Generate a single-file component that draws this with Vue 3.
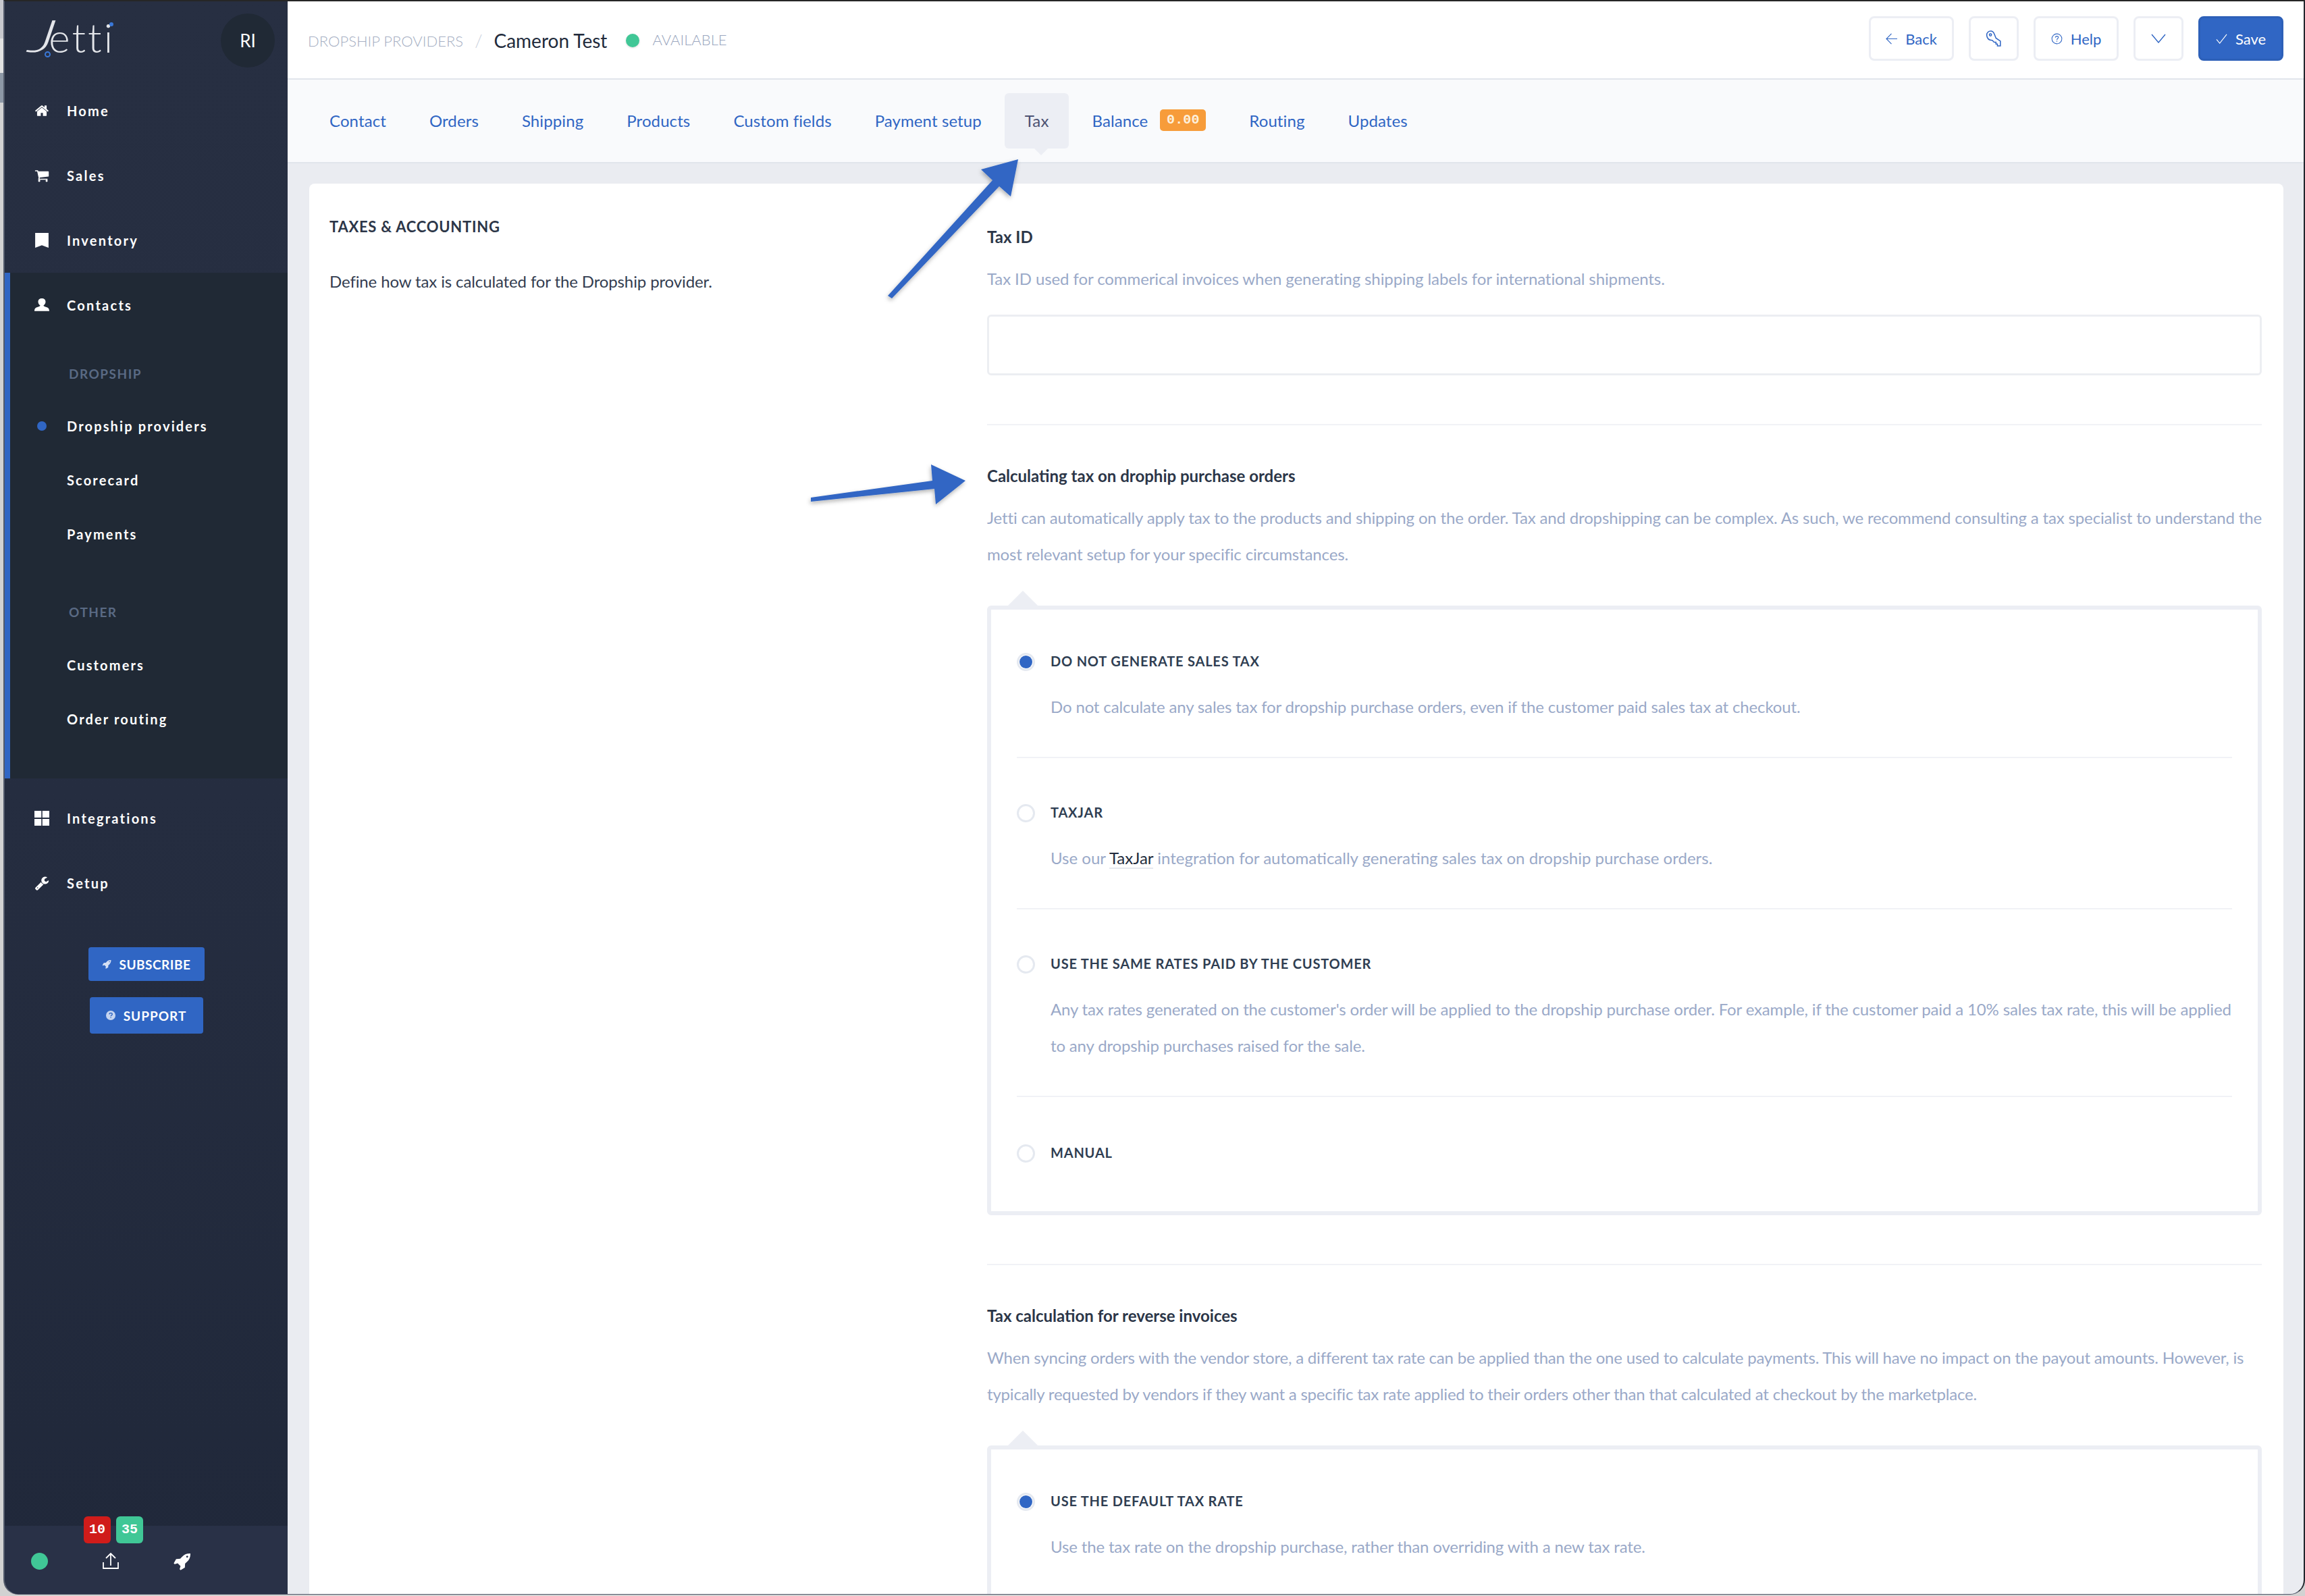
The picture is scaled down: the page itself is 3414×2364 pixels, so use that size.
<script setup>
const navTop = [
  { name: 'Home', icon: 'home' },
  { name: 'Sales', icon: 'cart' },
  { name: 'Inventory', icon: 'bookmark' },
]

const tabs = [
  { name: 'Contact' },
  { name: 'Orders' },
  { name: 'Shipping' },
  { name: 'Products' },
  { name: 'Custom fields' },
  { name: 'Payment setup' },
  { name: 'Tax', active: true },
  { name: 'Balance', badge: '0.00' },
  { name: 'Routing' },
  { name: 'Updates' },
]
</script>

<template>
  <div class="page">
    <div class="window">
      <aside class="sidebar">
        <div class="brand">
          <div class="logo">
            <span class="logo-j">J</span><span class="logo-rest">etti</span>
            <i class="logo-dot"></i>
            <i class="logo-ring"></i>
          </div>
          <div class="avatar">RI</div>
        </div>

        <a v-for="item in navTop" :key="item.name" class="nav-item">
          <svg v-if="item.icon === 'home'" class="nav-icon" viewBox="0 0 1792 1792"><path d="M1472 992v480q0 26-19 45t-45 19h-384v-384h-256v384h-384q-26 0-45-19t-19-45v-480q0-1 .5-3t.5-3l575-474 575 474q1 2 1 6zm223-69l-62 74q-8 9-21 11h-3q-13 0-21-7l-692-577-692 577q-12 8-24 7-13-2-21-11l-62-74q-8-10-7-23.500t11-21.500l719-599q32-26 76-26t76 26l244 204v-195q0-14 9-23t23-9h192q14 0 23 9t9 23v408l219 182q10 8 11 21.500t-7 23.500z"/></svg>
          <svg v-else-if="item.icon === 'cart'" class="nav-icon" viewBox="0 0 1792 1792"><path d="M704 1536q0 52-38 90t-90 38-90-38-38-90 38-90 90-38 90 38 38 90zm896 0q0 52-38 90t-90 38-90-38-38-90 38-90 90-38 90 38 38 90zm128-1088v512q0 24-16.500 42.500t-40.500 21.500l-1044 122q13 60 13 70 0 16-24 64h920q26 0 45 19t19 45-19 45-45 19h-1024q-26 0-45-19t-19-45q0-11 8-31.500t16-36 21.500-40 15.500-29.500l-177-823h-204q-26 0-45-19t-19-45 19-45 45-19h256q16 0 28.500 6.500t19.500 15.500 13 24.500 8 26 5.500 29.500 4.500 26h1201q26 0 45 19t19 45z"/></svg>
          <svg v-else class="nav-icon" viewBox="0 0 20 20"><path d="M1 0h18v20l-9-3.500-9 3.500z"/></svg>
          <span>{{ item.name }}</span>
        </a>

        <div class="nav-group">
          <a class="nav-item">
            <svg class="nav-icon" viewBox="0 0 20 20"><path d="M10 1c3 0 5 1.800 5 4.500 0 2.300-1.300 4-2.800 5 .3 1 1.500 1.500 3.300 2 2 .6 4.500 1.500 4.500 5.500H0c0-4 2.500-4.900 4.500-5.500 1.800-.5 3-1 3.300-2C6.300 9.500 5 7.800 5 5.500 5 2.800 7 1 10 1z"/></svg>
            <span>Contacts</span>
          </a>
          <div class="sub-label">DROPSHIP</div>
          <a class="sub-item"><i class="sub-dot"></i>Dropship providers</a>
          <a class="sub-item">Scorecard</a>
          <a class="sub-item">Payments</a>
          <div class="sub-label other">OTHER</div>
          <a class="sub-item">Customers</a>
          <a class="sub-item">Order routing</a>
        </div>

        <a class="nav-item first-after">
          <svg class="nav-icon grid" viewBox="0 0 20 20"><path d="M0 0h9.300v9H0zM10.700 0H20v9h-9.300zM0 11h9.300v9H0zM10.700 11H20v9h-9.300z"/></svg>
          <span>Integrations</span>
        </a>
        <a class="nav-item">
          <svg class="nav-icon" viewBox="0 0 1792 1792"><path d="M448 1472q0-26-19-45t-45-19-45 19-19 45 19 45 45 19 45-19 19-45zm644-420l-682 682q-37 37-90 37-52 0-91-37l-106-108q-38-36-38-90 0-53 38-91l681-681q39 98 114.500 173.500t173.500 114.500zm634-435q0 39-23 106-47 134-164.500 217.500t-258.500 83.500q-185 0-316.500-131.500t-131.500-316.500 131.500-316.500 316.500-131.500q58 0 121.500 16.500t107.500 46.500q16 11 16 28t-16 28l-293 169v224l193 107q5-3 79-48.500t135.500-81 70.500-35.500q15 0 23.500 10t8.500 25z"/></svg>
          <span>Setup</span>
        </a>

        <div class="side-buttons">
          <button class="side-btn sub">
            <svg viewBox="0 0 1792 1792"><path d="M1504 448q0-40-28-68t-68-28-68 28-28 68 28 68 68 28 68-28 28-68zm224-288q0 249-75.500 430.500t-253.500 360.500q-81 80-195 176l-20 379q-2 16-16 26l-384 224q-7 4-16 4-12 0-23-9l-64-64q-13-14-8-32l85-276-281-281-276 85q-3 1-9 1-14 0-23-9l-64-64q-17-19-5-39l224-384q10-14 26-16l379-20q96-114 176-195 188-187 358-258t431-71q14 0 23 9t9 23z"/></svg>
            SUBSCRIBE
          </button>
          <button class="side-btn sup">
            <svg viewBox="0 0 14 14"><circle cx="7" cy="7" r="7" fill="#c5d4f0"/><path d="M4.800 5.300c.2-1.200 1.100-1.800 2.300-1.800 1.300 0 2.200.7 2.200 1.800 0 1.700-2.200 1.500-2.200 3M7.100 9.500v1.300" fill="none" stroke="#3066c4" stroke-width="1.400"/></svg>
            SUPPORT
          </button>
        </div>

        <div class="side-foot">
          <i class="status-dot"></i>
          <div class="upload">
            <div class="counts">
              <span class="count red">10</span>
              <span class="count green">35</span>
            </div>
            <svg viewBox="0 0 24 24" fill="none" stroke="#fff" stroke-width="1.800"><path d="M1 14v9h22v-9M12 19V1.500M5 8l7-7 7 7"/></svg>
          </div>
          <svg class="rocket" viewBox="0 0 1792 1792" fill="#fff"><path d="M1504 448q0-40-28-68t-68-28-68 28-28 68 28 68 68 28 68-28 28-68zm224-288q0 249-75.500 430.500t-253.500 360.500q-81 80-195 176l-20 379q-2 16-16 26l-384 224q-7 4-16 4-12 0-23-9l-64-64q-13-14-8-32l85-276-281-281-276 85q-3 1-9 1-14 0-23-9l-64-64q-17-19-5-39l224-384q10-14 26-16l379-20q96-114 176-195 188-187 358-258t431-71q14 0 23 9t9 23z"/></svg>
        </div>
      </aside>

      <main class="main">
        <header class="topbar">
          <div class="crumbs">
            <span class="crumb">DROPSHIP PROVIDERS</span>
            <span class="slash">/</span>
            <span class="title">Cameron Test</span>
            <i class="avail-dot"></i>
            <span class="avail">AVAILABLE</span>
          </div>
          <div class="actions">
            <button class="btn w126">
              <svg viewBox="0 0 18 18" fill="none" stroke="currentColor" stroke-width="1.200"><path d="M9 1L1 9l8 8M1 9h17"/></svg>
              Back
            </button>
            <button class="btn w74">
              <svg class="key" viewBox="0 0 22 22" fill="none" stroke="currentColor" stroke-width="1.400"><path d="M1.500 7C1 3 4 1 7 1c2.500 0 4 2 5 4.500l2 5 6 4V21h-4v-2.500h-2V16h-2.500L9 13.500c-4 0-7-2.500-7.500-6.500z"/><circle cx="6.500" cy="6" r="1.500"/></svg>
            </button>
            <button class="btn w126">
              <svg viewBox="0 0 18 18" fill="none" stroke="currentColor" stroke-width="1.100"><circle cx="9" cy="9" r="7.800"/><path d="M6.600 7c.2-1.500 1.200-2.100 2.400-2.100 1.300 0 2.300.8 2.300 2 0 1.800-2.300 1.800-2.300 3.600M9 12v1.500"/></svg>
              Help
            </button>
            <button class="btn w74">
              <svg class="chev" viewBox="0 0 22 14" fill="none" stroke="currentColor" stroke-width="1.400"><path d="M1 1l10 12L21 1"/></svg>
            </button>
            <button class="btn w126 primary">
              <svg viewBox="0 0 18 18" fill="none" stroke="currentColor" stroke-width="1.200"><path d="M1 10l5 6L17 2"/></svg>
              Save
            </button>
          </div>
        </header>

        <nav class="tabs">
          <a v-for="tab in tabs" :key="tab.name" class="tab" :class="{ active: tab.active }">
            {{ tab.name }}
            <span v-if="tab.badge" class="tab-badge">{{ tab.badge }}</span>
          </a>
        </nav>

        <div class="content">
          <section class="card">
            <div class="left-col">
              <h2>TAXES &amp; ACCOUNTING</h2>
              <p>Define how tax is calculated for the Dropship provider.</p>
            </div>
            <div class="right-col">
              <div class="block">
                <h3>Tax ID</h3>
                <p class="desc">Tax ID used for commerical invoices when generating shipping labels for international shipments.</p>
                <div class="input"></div>
              </div>

              <div class="block">
                <h3>Calculating tax on drophip purchase orders</h3>
                <p class="desc">Jetti can automatically apply tax to the products and shipping on the order. Tax and dropshipping can be complex. As such, we recommend consulting a tax specialist to understand the most relevant setup for your specific circumstances.</p>
                <div class="options">
                  <div class="option">
                    <i class="radio on"></i>
                    <div>
                      <div class="opt-label">DO NOT GENERATE SALES TAX</div>
                      <p class="desc">Do not calculate any sales tax for dropship purchase orders, even if the customer paid sales tax at checkout.</p>
                    </div>
                  </div>
                  <div class="option">
                    <i class="radio"></i>
                    <div>
                      <div class="opt-label">TAXJAR</div>
                      <p class="desc wide">Use our <a class="link">TaxJar</a> integration for automatically generating sales tax on dropship purchase orders.</p>
                    </div>
                  </div>
                  <div class="option">
                    <i class="radio"></i>
                    <div>
                      <div class="opt-label">USE THE SAME RATES PAID BY THE CUSTOMER</div>
                      <p class="desc">Any tax rates generated on the customer's order will be applied to the dropship purchase order. For example, if the customer paid a 10% sales tax rate, this will be applied to any dropship purchases raised for the sale.</p>
                    </div>
                  </div>
                  <div class="option last">
                    <i class="radio"></i>
                    <div>
                      <div class="opt-label">MANUAL</div>
                    </div>
                  </div>
                </div>
              </div>

              <div class="block">
                <h3>Tax calculation for reverse invoices</h3>
                <p class="desc tight">When syncing orders with the vendor store, a different tax rate can be applied than the one used to calculate payments. This will have no impact on the payout amounts. However, is typically requested by vendors if they want a specific tax rate applied to their orders other than that calculated at checkout by the marketplace.</p>
                <div class="options">
                  <div class="option">
                    <i class="radio on"></i>
                    <div>
                      <div class="opt-label">USE THE DEFAULT TAX RATE</div>
                      <p class="desc">Use the tax rate on the dropship purchase, rather than overriding with a new tax rate.</p>
                    </div>
                  </div>
                </div>
              </div>
            </div>
          </section>
        </div>
      </main>

      <!-- annotation arrows drawn on top of the screenshot -->
      <svg class="arrows" viewBox="0 0 3414 2364">
        <defs>
          <filter id="arrowShadow" x="-20%" y="-20%" width="140%" height="140%">
            <feDropShadow dx="-1" dy="3" stdDeviation="3" flood-color="#000" flood-opacity="0.3"/>
          </filter>
        </defs>
        <polygon filter="url(#arrowShadow)" fill="#3066c4" points="1508,236 1453,251 1470,267 1315,438 1321,442 1480,276 1497,291"/>
        <polygon filter="url(#arrowShadow)" fill="#3066c4" points="1430,712 1379,688 1381,712 1201,737 1201,743 1384,724 1386,747"/>
      </svg>
    </div>
  </div>
</template>

<style>
html, body {
  margin: 0;
  overflow: hidden;
  background: #d2d2d2;
}
</style>

<style scoped>
* {
  box-sizing: border-box;
}

.page {
  width: 3414px;
  height: 2364px;
  padding-left: 5px;
  font-family: Lato, "Liberation Sans", sans-serif;
  background: linear-gradient(180deg, #c8c9ce 0, #c8c9ce 57px, #e2e2e2 57px, #e2e2e2 108px, #8d98a6 108px, #8d98a6 152px, #d2d2d2 152px);
}

.window {
  position: relative;
  display: flex;
  height: 2362px;
  border-top: 2px solid #262626;
  border-left: 2px solid #525a6b;
  border-right: 2px solid #23262d;
  border-bottom: 1px solid #50586a;
  border-radius: 0 0 22px 22px;
  overflow: hidden;
  background: #eaecf1;
}

/* sidebar */
.sidebar {
  flex: 0 0 419px;
  display: flex;
  flex-direction: column;
  color: #fff;
  background: linear-gradient(180deg, #272f42 0, #252d40 50%, #20283a 100%);
}

.brand {
  height: 114px;
  display: flex;
  justify-content: space-between;
  align-items: flex-start;
  padding: 18px 19px 0 35px;
}

.logo {
  position: relative;
  font-size: 60px;
  font-weight: 300;
  line-height: 70px;
  color: #e4e6ea;
  display: flex;
  width: 128px;
}

.logo-j {
  font-style: italic;
  font-weight: 300;
  font-size: 66px;
  width: 42px;
  transform: translate(10px, -3px) scaleX(1.5) skewX(-6deg);
}

.logo-rest {
  letter-spacing: 3px;
  font-size: 60px;
}

.logo-dot {
  position: absolute;
  right: 2px;
  top: 13px;
  width: 6px;
  height: 6px;
  border-radius: 50%;
  background: #3a78d8;
}

.logo-ring {
  position: absolute;
  left: 24px;
  top: 56px;
  width: 9px;
  height: 9px;
  border: 2px solid #3a78d8;
  border-radius: 50%;
}

.avatar {
  width: 80px;
  height: 80px;
  border-radius: 50%;
  background: #202935;
  font-size: 26px;
  display: flex;
  align-items: center;
  justify-content: center;
}

.nav-item {
  height: 96px;
  display: flex;
  align-items: center;
  padding-left: 44px;
  font-size: 20px;
  font-weight: 700;
  letter-spacing: 2.25px;
}

.nav-icon {
  width: 22px;
  height: 22px;
  fill: #fff;
  margin-right: 26px;
  flex: none;
}

.nav-group {
  background: #202935;
  border-left: 8px solid #3066c4;
  padding-bottom: 48px;
}

.nav-group .nav-item {
  padding-left: 36px;
}

.sub-label {
  height: 40px;
  line-height: 40px;
  margin: 34px 0 17px;
  padding-left: 87px;
  font-size: 19px;
  font-weight: 700;
  letter-spacing: 1.5px;
  color: #5a6a84;
}

.sub-label.other {
  margin: 56px 0 18px;
}

.sub-item {
  position: relative;
  display: block;
  height: 80px;
  line-height: 80px;
  padding-left: 84px;
  font-size: 20px;
  font-weight: 700;
  letter-spacing: 2.15px;
}

.sub-dot {
  position: absolute;
  left: 40px;
  top: 33px;
  width: 14px;
  height: 14px;
  border-radius: 50%;
  background: #3066c4;
}

.first-after {
  margin-top: 11px;
}

.side-buttons {
  margin-top: 47px;
  display: flex;
  flex-direction: column;
  align-items: center;
  gap: 24px;
}

.side-btn {
  display: flex;
  align-items: center;
  justify-content: center;
  font-family: inherit;
  font-size: 19px;
  font-weight: 700;
  letter-spacing: 1px;
  color: #fff;
  background: #3066c4;
  border: 0;
  border-radius: 4px;
}

.side-btn.sub {
  width: 172px;
  height: 50px;
  letter-spacing: 0.5px;
}

.side-btn.sup {
  width: 168px;
  height: 54px;
}

.side-btn svg {
  width: 14px;
  height: 14px;
  margin-right: 12px;
  fill: #d5e0f5;
}

.side-foot {
  margin-top: auto;
  height: 101px;
  padding: 40px 0 0 39px;
  display: flex;
  align-items: flex-start;
  background: #293147;
}

.status-dot {
  width: 25px;
  height: 25px;
  border-radius: 50%;
  background: #40c796;
}

.upload {
  position: relative;
  margin-left: 81px;
}

.upload svg {
  display: block;
  width: 24px;
  height: 24px;
}

.counts {
  position: absolute;
  left: -28px;
  top: -54px;
  display: flex;
  gap: 8px;
}

.count {
  width: 40px;
  height: 40px;
  border-radius: 6px;
  font-family: "Liberation Mono", monospace;
  font-size: 20px;
  font-weight: 700;
  line-height: 40px;
  text-align: center;
}

.count.red {
  background: #d01c1a;
}

.count.green {
  background: #40c796;
}

.rocket {
  width: 27px;
  height: 27px;
  margin: -1px 0 0 80px;
}

/* main column */
.main {
  flex: 1;
  min-width: 0;
  display: flex;
  flex-direction: column;
}

.topbar {
  height: 116px;
  padding: 22px 30px 0 30px;
  display: flex;
  justify-content: space-between;
  background: #fff;
  border-bottom: 2px solid #e1e5eb;
}

.crumbs {
  display: flex;
  align-items: center;
  height: 72px;
}

.crumb {
  font-size: 22px;
  font-weight: 300;
  color: #a6afc3;
}

.slash {
  margin: 0 17px;
  font-size: 26px;
  font-weight: 300;
  color: #c9cfdb;
}

.title {
  font-size: 28px;
  color: #222b3c;
}

.avail-dot {
  width: 20px;
  height: 20px;
  margin: 0 19px 0 28px;
  border-radius: 50%;
  background: #40c796;
  box-shadow: 0 1px 3px rgba(0, 0, 0, 0.15);
}

.avail {
  font-size: 22px;
  font-weight: 300;
  color: #9aa6be;
  margin-top: -4px;
}

.actions {
  display: flex;
  gap: 22px;
  height: 66px;
}

.btn {
  height: 66px;
  display: flex;
  align-items: center;
  justify-content: center;
  font-family: inherit;
  font-size: 22px;
  color: #3066c4;
  background: #fff;
  border: 3px solid #eceef4;
  border-radius: 8px;
}

.btn svg {
  width: 17px;
  height: 17px;
  margin-right: 12px;
}

.btn .key {
  width: 24px;
  height: 24px;
  margin: 0;
}

.btn .chev {
  width: 22px;
  height: 14px;
  margin: 0;
}

.w126 {
  width: 126px;
}

.w74 {
  width: 74px;
}

.btn.primary {
  color: #fff;
  background: #3066c4;
  border-color: #2d60b8;
}

.tabs {
  height: 124px;
  padding: 20px 0 0 32px;
  display: flex;
  gap: 4px;
  background: #f9fafc;
  border-bottom: 2px solid #e1e5eb;
}

.tab {
  position: relative;
  height: 82px;
  padding: 0 30px 2px;
  display: flex;
  align-items: center;
  font-size: 24px;
  letter-spacing: 0.1px;
  color: #3066c4;
  border-radius: 6px;
}

.tab.active {
  color: #4c5272;
  background: #eceef4;
}

.tab.active::after {
  content: "";
  position: absolute;
  left: 44px;
  bottom: -10px;
  border-left: 10px solid transparent;
  border-right: 10px solid transparent;
  border-top: 10px solid #eceef4;
}

.tab-badge {
  margin-left: 18px;
  width: 68px;
  height: 32px;
  border-radius: 5px;
  background: #f79c3a;
  color: #fdf0dc;
  font-family: "Liberation Mono", monospace;
  font-size: 20px;
  font-weight: 700;
  line-height: 32px;
  text-align: center;
}

.content {
  flex: 1;
  min-height: 0;
  padding: 30px 30px 0 32px;
}

.card {
  display: flex;
  background: #fff;
  border-radius: 8px 8px 0 0;
  padding: 0 32px 0 30px;
}

.left-col {
  flex: 0 0 974px;
  padding-top: 44px;
}

h2 {
  margin: 0 0 34px;
  font-size: 22px;
  font-weight: 700;
  line-height: 40px;
  letter-spacing: 0.75px;
  color: #2c3648;
}

.left-col p {
  margin: 0;
  font-size: 24px;
  line-height: 54px;
  letter-spacing: -0.12px;
  color: #333d50;
}

.right-col {
  flex: 1;
  min-width: 0;
}

.block {
  padding: 55px 0 72px;
  border-bottom: 2px solid #f1f2f6;
}

.block:first-child {
  padding-top: 59px;
  padding-bottom: 72px;
}

.block:last-child {
  border-bottom: 0;
}

h3 {
  margin: 0 0 15px;
  font-size: 24px;
  font-weight: 700;
  line-height: 40px;
  color: #2c3648;
}

.desc {
  margin: 0;
  font-size: 24px;
  line-height: 54px;
  letter-spacing: -0.15px;
  color: #9aa9c8;
}

.desc.wide {
  letter-spacing: 0;
}

.desc.tight {
  letter-spacing: -0.2px;
}

.block:first-child .desc {
  letter-spacing: -0.09px;
}

.input {
  height: 90px;
  margin-top: 26px;
  border: 3px solid #eceef2;
  border-radius: 6px;
}

.options {
  position: relative;
  margin-top: 49px;
  padding: 0 38px;
  border: 6px solid #eceef4;
  border-radius: 6px;
}

.options::before {
  content: "";
  position: absolute;
  left: 25px;
  top: -28px;
  border-left: 22px solid transparent;
  border-right: 22px solid transparent;
  border-bottom: 22px solid #eceef4;
}

.option {
  display: flex;
  padding: 60px 0 47px;
  border-bottom: 2px solid #f1f2f6;
}

.option:first-child {
  padding-top: 56px;
}

.option.last {
  padding: 62px 0 67px;
  border-bottom: 0;
}

.opt-label {
  font-size: 20px;
  font-weight: 700;
  line-height: 40px;
  letter-spacing: 0.8px;
  color: #2f3e52;
}

.option .desc {
  margin-top: 21px;
}

.radio {
  flex: none;
  position: relative;
  width: 27px;
  height: 27px;
  margin: 8px 23px 0 0;
  border: 3px solid #e5e9f0;
  border-radius: 50%;
  background: #fff;
}

.radio.on::after {
  content: "";
  position: absolute;
  inset: 1px;
  border-radius: 50%;
  background: #3066c4;
}

.link {
  color: #222b3c;
  border-bottom: 2px solid #e5e8ef;
}

.arrows {
  position: absolute;
  left: -7px;
  top: -2px;
  width: 3414px;
  height: 2364px;
  pointer-events: none;
}
</style>
